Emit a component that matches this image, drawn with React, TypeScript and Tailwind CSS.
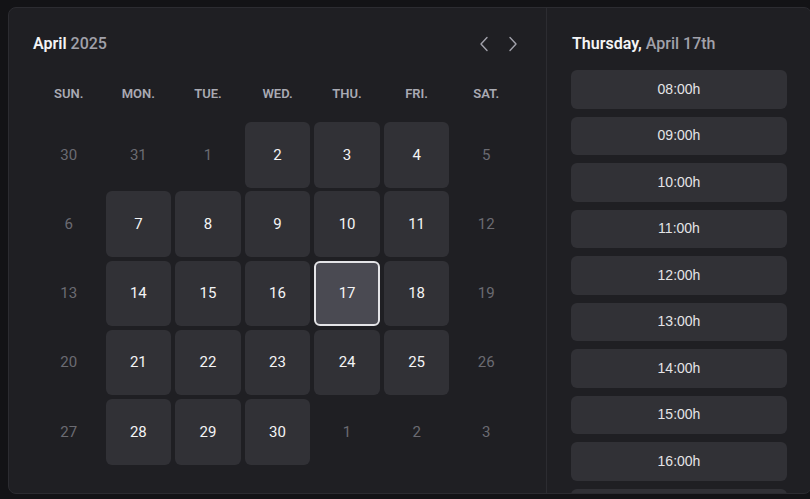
import React from "react";

type Day = { n: number; kind: "out" | "off" | "on" | "sel" };

const rows: Day[][] = (() => {
  const on = new Set([2, 3, 4, 7, 8, 9, 10, 11, 14, 15, 16, 18, 21, 22, 23, 24, 25, 28, 29, 30]);
  const nums = [30, 31, ...Array.from({ length: 30 }, (_, i) => i + 1), 1, 2, 3];
  const days: Day[] = nums.map((n, i) => {
    if (i < 2 || i >= 32) return { n, kind: "out" };
    if (n === 17) return { n, kind: "sel" };
    return { n, kind: on.has(n) ? "on" : "off" };
  });
  const r: Day[][] = [];
  for (let i = 0; i < 35; i += 7) r.push(days.slice(i, i + 7));
  return r;
})();

const weekdays = ["SUN.", "MON.", "TUE.", "WED.", "THU.", "FRI.", "SAT."];
const slots = ["08:00h", "09:00h", "10:00h", "11:00h", "12:00h", "13:00h", "14:00h", "15:00h", "16:00h", ""];

function Chevron({ dir }: { dir: "l" | "r" }) {
  return (
    <svg width="10" height="16" viewBox="0 0 10 16" fill="none" className="text-[#a1a1aa]">
      <path
        d={dir === "l" ? "M8 1.5 L2 8 L8 14.5" : "M2 1.5 L8 8 L2 14.5"}
        stroke="currentColor"
        strokeWidth="1.4"
        strokeLinecap="round"
        strokeLinejoin="round"
      />
    </svg>
  );
}

export default function App() {
  return (
    <div
      className="w-[810px] h-[499px] overflow-hidden bg-[#131316] pl-[8px] pt-[7px]"
      style={{ fontFamily: "Roboto, 'Noto Sans', sans-serif" }}
    >
      <div className="w-[804px] h-[487px] rounded-[8px] border border-[#2c2c31] bg-[#1f1f23] flex overflow-hidden">
        {/* Calendar */}
        <div className="w-[538px] shrink-0 border-r border-[#2c2c31] pl-[27px] pr-[27px] pt-[26px]">
          <div className="flex items-center justify-between h-[20px] -ml-[3px]">
            <div className="text-[16px] font-semibold leading-[20px]">
              <span className="text-[#f4f4f5]">April</span>{" "}
              <span className="text-[#a1a1aa] font-medium">2025</span>
            </div>
            <div className="flex items-center gap-[19px] pr-[1px]">
              <Chevron dir="l" />
              <Chevron dir="r" />
            </div>
          </div>
          <div className="grid grid-cols-7 gap-x-[4px] mt-[32px]">
            {weekdays.map((w) => (
              <div key={w} className="text-center text-[13px] font-semibold leading-[16px] text-[#a9aab3]">
                {w}
              </div>
            ))}
          </div>
          <div className="grid grid-cols-7 gap-x-[4px] gap-y-[3.7px] mt-[20px]">
            {rows.flat().map((d, i) => {
              const base = "aspect-square flex items-center justify-center text-[15px] font-normal rounded-[6px]";
              if (d.kind === "sel")
                return (
                  <div key={i} className={`${base} bg-[#4a4a52] border-2 border-[#e4e4e7] text-[#f4f4f5]`}>
                    {d.n}
                  </div>
                );
              if (d.kind === "on")
                return (
                  <div key={i} className={`${base} bg-[#313136] text-[#f4f4f5]`}>
                    {d.n}
                  </div>
                );
              return (
                <div key={i} className={`${base} text-[#6b6b72]`}>
                  {d.n}
                </div>
              );
            })}
          </div>
        </div>
        {/* Time slots */}
        <div className="flex-1 pl-[25px] pt-[26px] overflow-hidden">
          <div className="text-[16px] font-semibold leading-[20px]">
            <span className="text-[#f4f4f5]">Thursday,</span>{" "}
            <span className="text-[#a1a1aa] font-medium">April 17th</span>
          </div>
          <div className="mt-[16px] w-[216px] -ml-[1px] flex flex-col gap-[8px]">
            {slots.map((s, i) => (
              <div
                key={i}
                className="h-[38.5px] shrink-0 rounded-[6px] bg-[#313136] flex items-center justify-center text-[14px] text-[#e4e4e7]"
                style={{ fontFamily: "'Liberation Sans', Arial, sans-serif" }}
              >
                {s}
              </div>
            ))}
          </div>
        </div>
      </div>
    </div>
  );
}
